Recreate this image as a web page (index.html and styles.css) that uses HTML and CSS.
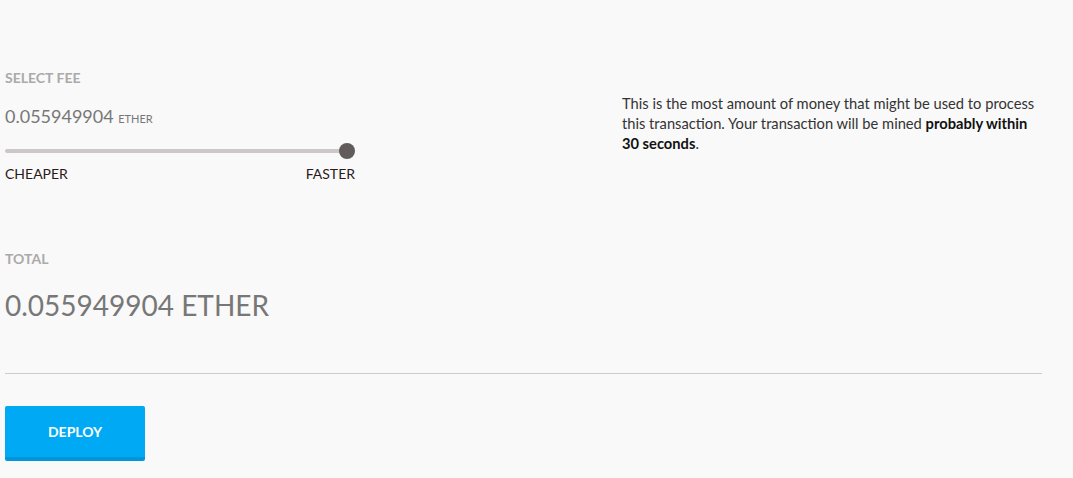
FILE: index.html
```html
<!DOCTYPE html>
<html>
<head>
<meta charset="utf-8">
<link rel="stylesheet" href="styles.css">
</head>
<body>
<div class="page">
  <div class="fee-row">
    <div class="fee-col">
      <h3 class="label">Select Fee</h3>
      <div class="fee-amount">0.055949904 <span class="unit">ether</span></div>
      <div class="slider">
        <div class="track"></div>
        <div class="thumb"></div>
      </div>
      <div class="ends"><span>CHEAPER</span><span>FASTER</span></div>
    </div>
    <p class="fee-info">This is the most amount of money that might be used to process this transaction. Your transaction will be mined <strong>probably within 30 seconds</strong>.</p>
  </div>
  <h3 class="label total-label">Total</h3>
  <div class="total">0.055949904 ETHER</div>
  <hr class="divider">
  <button class="deploy">DEPLOY</button>
</div>
</body>
</html>
```
FILE: styles.css
```css
html, body {
  margin: 0;
  background: #f9f9f9;
  font-family: Lato, "Open Sans", sans-serif;
  color: #333;
}
.page {
  width: 1037px;
  padding: 66px 0 0 5px;
}
.fee-row {
  display: grid;
  grid-template-columns: 350px 420px;
  justify-content: space-between;
}
.label {
  margin: 0;
  font-size: 14px;
  font-weight: 700;
  text-transform: uppercase;
  color: #aaa;
  line-height: 24px;
}
.fee-amount {
  margin-top: 14px;
  font-size: 18px;
  color: #777;
  line-height: 24px;
}
.unit {
  font-size: 11px;
  text-transform: uppercase;
}
.slider {
  position: relative;
  height: 16px;
  margin-top: 12px;
}
.track {
  position: absolute;
  left: 0;
  right: 0;
  top: 6px;
  height: 4px;
  background: #ccc8c8;
  border-radius: 2px;
}
.thumb {
  position: absolute;
  right: 0;
  top: 0;
  width: 16px;
  height: 16px;
  border-radius: 50%;
  background: #625b5b;
}
.ends {
  display: flex;
  justify-content: space-between;
  margin-top: 6px;
  font-size: 14px;
  color: #2a1a1a;
  line-height: 18px;
}
.fee-info {
  margin: 27px 0 0;
  font-size: 14.7px;
  line-height: 20px;
  color: #333;
}
.fee-info strong {
  color: #111;
}
.total-label {
  margin-top: 64px;
}
.total {
  margin-top: 17px;
  font-size: 28px;
  color: #777;
  line-height: 34px;
}
.divider {
  margin: 51px 0 0;
  border: 0;
  border-top: 1px solid #ccc;
}
.deploy {
  margin-top: 32px;
  width: 140px;
  height: 55px;
  border: 0;
  border-bottom: 4px solid #0096d9;
  border-radius: 2px;
  background: #00a9f4;
  color: #fff;
  font-family: inherit;
  font-size: 14px;
  font-weight: 700;
  padding: 0;
}
```
